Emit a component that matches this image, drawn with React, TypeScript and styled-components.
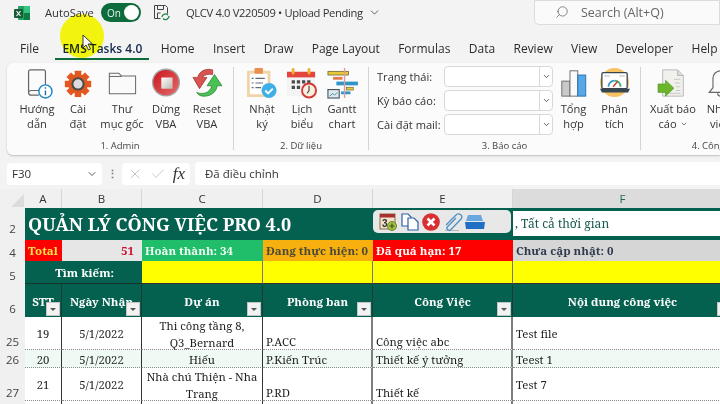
import { FC, ReactNode } from "react";
import styled, { createGlobalStyle } from "styled-components";
import { ChevronDown, Search, X, Check } from "lucide-react";

const uiFont = `"Open Sans", "Noto Sans", sans-serif`;
const sheetFont = `"Noto Serif", "Liberation Serif", "DejaVu Serif", serif`;
const green = "#04614f";

const GlobalStyle = createGlobalStyle`
    html, body {
        margin: 0;
        padding: 0;
        background: #f3f3f3;
    }
    body {
        width: 720px;
        height: 404px;
        overflow: hidden;
        font-family: ${uiFont};
    }
`;

const Page = styled.div`
    position: relative;
    width: 720px;
    height: 404px;
    overflow: hidden;
    background: #f3f3f3;
    color: #262626;
`;

/* title bar */
const TitleBar = styled.div`
    display: flex;
    align-items: center;
    height: 25px;
    padding: 0 0 0 14px;
    font-size: 11.2px;
`;

const AutoSave = styled.span`
    margin-left: 15px;
    color: #333;
`;

const Toggle = styled.div`
    display: flex;
    align-items: center;
    justify-content: space-between;
    width: 40px;
    height: 19px;
    margin-left: 7px;
    padding: 0 2px 0 6px;
    box-sizing: border-box;
    border-radius: 10px;
    background: #0e6b3c;
    color: #e8f3ec;
    font-size: 10px;

    i {
        display: block;
        width: 15px;
        height: 15px;
        border-radius: 50%;
        background: #fff;
    }
`;

const DocTitle = styled.span`
    display: flex;
    align-items: center;
    gap: 5px;
    margin-left: 16px;
    color: #333;
    letter-spacing: -0.33px;
    white-space: nowrap;
`;

const SearchBox = styled.div`
    display: flex;
    align-items: center;
    gap: 12px;
    margin-left: auto;
    width: 186px;
    height: 25px;
    margin-top: -1px;
    padding-left: 20px;
    box-sizing: border-box;
    background: #fafafa;
    border: 1px solid #dcdcdc;
    border-radius: 0 0 0 5px;
    color: #666;
    font-size: 12.5px;
    white-space: nowrap;

    svg {
        transform: scaleX(-1);
    }
`;

/* tabs */
const Tabs = styled.div`
    display: flex;
    gap: 18.4px;
    height: 38px;
    align-items: flex-start;
    padding: 15px 0 0 20px;
    box-sizing: border-box;
`;

const Tab = styled.div<{ $active?: boolean }>`
    position: relative;
    margin-left: ${(p) => (p.$active ? 5 : 0)}px;
    font-size: 12px;
    line-height: 17px;
    white-space: nowrap;
    color: ${(p) => (p.$active ? "#14284b" : "#2c2c2c")};
    font-weight: ${(p) => (p.$active ? 600 : 400)};

    &::after {
        content: "";
        display: ${(p) => (p.$active ? "block" : "none")};
        position: absolute;
        left: -7px;
        right: -7px;
        top: 18px;
        height: 2px;
        background: #0e6b3c;
    }
`;

/* ribbon */
const Ribbon = styled.div`
    display: flex;
    height: 92px;
    margin-left: 7px;
    background: #fbfbfb;
    border-radius: 6px 0 0 6px;
    box-shadow: 0 1px 2px rgba(0, 0, 0, 0.22);
`;

const Group = styled.div<{ $width: number; $last?: boolean }>`
    display: flex;
    flex-direction: column;
    flex: none;
    width: ${(p) => p.$width}px;
    box-sizing: border-box;
    margin: 4px 0 5px;
    border-right: ${(p) => (p.$last ? "none" : "1px solid #d4d4d4")};
`;

const GroupBody = styled.div<{ $pad?: number }>`
    display: flex;
    flex: 1;
    min-height: 0;
    padding-left: ${(p) => p.$pad ?? 0}px;
`;

const GroupLabel = styled.div`
    height: 8px;
    line-height: 8px;
    text-align: center;
    font-size: 9.5px;
    color: #444;
    white-space: nowrap;
`;

const ButtonRoot = styled.div<{ $width: number }>`
    display: flex;
    flex-direction: column;
    align-items: center;
    flex: none;
    width: ${(p) => p.$width}px;
    padding-top: 1px;
    font-size: 11.1px;
    line-height: 15px;
    color: #333;
    text-align: center;
    white-space: nowrap;

    > svg {
        display: block;
        flex: none;
        width: 30px;
        height: 30px;
        margin-bottom: 2.5px;
        overflow: visible;
    }
`;

interface RibbonButtonProps {
    width: number;
    icon: ReactNode;
    label: ReactNode;
}

const RibbonButton: FC<RibbonButtonProps> = ({ width, icon, label }) => (
    <ButtonRoot $width={width}>
        {icon}
        <div>{label}</div>
    </ButtonRoot>
);

const Fields = styled.div`
    display: flex;
    flex-direction: column;
    gap: 3px;
    width: 184px;
    margin-top: -1px;
    padding: 0 0 0 8px;
    box-sizing: border-box;
`;

const Field = styled.div`
    display: flex;
    align-items: center;
    justify-content: space-between;
    font-size: 11.1px;
    color: #333;
    white-space: nowrap;
`;

const Combo = styled.div`
    display: flex;
    justify-content: flex-end;
    align-items: center;
    width: 109px;
    height: 21px;
    box-sizing: border-box;
    background: #fff;
    border: 1px solid #d8d8d8;
    border-radius: 4px;

    span {
        display: flex;
        align-items: center;
        justify-content: center;
        width: 12px;
        height: 100%;
        border-left: 1px solid #d8d8d8;
    }
`;

/* formula bar */
const FormulaBar = styled.div`
    display: flex;
    align-items: center;
    height: 23px;
    margin-top: 7px;
    padding-left: 7px;
    font-size: 11.5px;
`;

const NameBox = styled.div`
    display: flex;
    align-items: center;
    justify-content: space-between;
    width: 95px;
    height: 22px;
    padding: 0 4px 0 5px;
    box-sizing: border-box;
    background: #fff;
    border-radius: 4px;
    color: #333;
`;

const Dots = styled.div`
    width: 20px;
    text-align: center;
    color: #777;
    font-weight: 700;
    font-size: 11px;
`;

const FxBox = styled.div`
    display: flex;
    align-items: center;
    justify-content: space-between;
    width: 68px;
    height: 22px;
    padding: 0 5px 0 5px;
    box-sizing: border-box;
    background: #fff;
    border-radius: 4px;
    margin-right: 5px;

    b {
        font-family: "Liberation Serif", serif;
        font-style: italic;
        font-weight: 400;
        font-size: 17px;
        color: #333;
    }
`;

const FormulaInput = styled.div`
    flex: 1;
    height: 23px;
    line-height: 23px;
    padding-left: 10px;
    background: #fff;
    border-radius: 4px 0 0 4px;
    color: #333;
`;

/* sheet */
const Sheet = styled.div`
    display: grid;
    grid-template-columns: 25px 37px 80px 121px 110px 140px 220px;
    grid-template-rows: 19px 32px 21px 23px 33px 33px 18px 33px 20px;
    margin-top: 4px;
    font-family: ${sheetFont};
`;

const Corner = styled.div`
    position: relative;
    background: #f0f0f0;

    &::after {
        content: "";
        position: absolute;
        right: 1px;
        bottom: 1px;
        border-style: solid;
        border-width: 0 0 13px 13px;
        border-color: transparent transparent #dcdcdc transparent;
    }
`;

const ColHead = styled.div<{ $selected?: boolean }>`
    display: flex;
    align-items: center;
    justify-content: center;
    font-family: ${uiFont};
    font-size: 11.5px;
    color: ${(p) => (p.$selected ? "#1c6b45" : "#333")};
    background: ${(p) => (p.$selected ? "#dcdcdc" : "#f0f0f0")};
    border-right: 1px solid #d6d6d6;
    box-sizing: border-box;
`;

const RowHead = styled.div<{ $pad?: number }>`
    display: flex;
    align-items: flex-end;
    justify-content: center;
    padding-bottom: ${(p) => p.$pad ?? 1}px;
    box-sizing: border-box;
    font-family: ${uiFont};
    font-size: 11.5px;
    color: #444;
    background: #f0f0f0;
`;

const TitleCell = styled.div`
    grid-column: span 4;
    display: flex;
    align-items: center;
    padding-left: 3px;
    background: ${green};
    color: #fff;
    font-size: 18px;
    font-weight: 700;
    white-space: nowrap;
`;

const ToolCell = styled.div`
    background: ${green};
    padding: 2px 2px 0 0;
    box-sizing: border-box;
`;

const ToolStrip = styled.div`
    display: flex;
    align-items: center;
    gap: 3.5px;
    width: 138px;
    height: 23px;
    padding-left: 6px;
    box-sizing: border-box;
    background: #e8e8e8;
    border-radius: 5px;

    svg {
        display: block;
        flex: none;
        width: 18px;
        height: 18px;
        overflow: visible;
    }
`;

const FilterCell = styled.div`
    background: ${green};
    padding: 3px 0 4px 0;
    box-sizing: border-box;

    div {
        height: 100%;
        line-height: 25px;
        padding-left: 2px;
        background: #fff;
        color: #14584a;
        font-size: 12px;
    }
`;

const StatCell = styled.div<{ $bg: string; $color: string; $right?: boolean }>`
    display: flex;
    align-items: center;
    justify-content: ${(p) => (p.$right ? "flex-end" : "flex-start")};
    padding: 0 ${(p) => (p.$right ? 8 : 3)}px 0 3px;
    box-sizing: border-box;
    background: ${(p) => p.$bg};
    color: ${(p) => p.$color};
    font-size: 11.5px;
    font-weight: 700;
    white-space: nowrap;
    overflow: hidden;
`;

const SearchLabel = styled.div`
    grid-column: span 2;
    display: flex;
    align-items: center;
    justify-content: flex-end;
    padding-right: 28px;
    background: ${green};
    color: #fff;
    font-size: 11.5px;
    font-weight: 700;
    border-bottom: 1px solid #18332c;
    box-sizing: border-box;
`;

const YellowCell = styled.div`
    background: #ffff00;
    border-right: 1px solid #777;
    border-bottom: 1px solid #333;
    box-sizing: border-box;
`;

const HeadCell = styled.div`
    position: relative;
    display: flex;
    align-items: center;
    justify-content: center;
    padding-top: 1px;
    box-sizing: border-box;
    background: ${green};
    color: #fff;
    font-size: 11.5px;
    font-weight: 700;
    white-space: nowrap;
    overflow: hidden;
    border-right: 1px solid #1d3a33;
`;

const FilterButton = styled.span`
    position: absolute;
    right: 1px;
    bottom: 1px;
    width: 14px;
    height: 14px;
    background: #f2f2f2;
    border: 1px solid #c4c4c4;
    box-sizing: border-box;

    &::after {
        content: "";
        position: absolute;
        left: 3px;
        top: 5px;
        border-style: solid;
        border-width: 3px 3px 0 3px;
        border-color: #555 transparent transparent transparent;
    }
`;

const DataCell = styled.div<{ $tint?: boolean; $center?: boolean; $bottom?: boolean; $heavy?: boolean }>`
    display: flex;
    align-items: ${(p) => (p.$bottom ? "flex-end" : "center")};
    justify-content: ${(p) => (p.$center ? "center" : "flex-start")};
    padding: ${(p) => (p.$bottom ? "0 3px" : "1px 3px 0")};
    box-sizing: border-box;
    text-align: ${(p) => (p.$center ? "center" : "left")};
    background: ${(p) => (p.$tint ? "#effaf5" : "#fff")};
    color: #1f1f1f;
    font-size: 11.3px;
    line-height: ${(p) => (p.$bottom ? 14 : 17)}px;
    white-space: pre-line;
    border-bottom: 1px dotted #8a8a8a;
    border-right: ${(p) => (p.$heavy ? "2px solid #7d7d7d" : "1px solid #333")};
`;

const Highlight = styled.div`
    position: absolute;
    left: 60px;
    top: 14px;
    width: 44px;
    height: 44px;
    border-radius: 50%;
    background: #ffff10;
    mix-blend-mode: multiply;
`;

const Pointer = styled.svg`
    position: absolute;
    left: 82px;
    top: 34px;
    width: 11px;
    height: 17px;
`;

/* icons */
const ExcelLogo = () => (
    <svg width="16" height="16" viewBox="0 0 16 16">
        <rect x="4" y="1" width="12" height="14" rx="1" fill="#21a366" />
        <rect x="10" y="1" width="6" height="7" fill="#33c481" />
        <rect x="10" y="8" width="6" height="7" fill="#107c41" />
        <rect x="0" y="4" width="9" height="9" rx="1" fill="#185c37" />
        <path d="M2.5 6l4 5M6.500 6l-4 5" stroke="#fff" strokeWidth="1.1" />
    </svg>
);

const SaveSync = () => (
    <svg width="17" height="17" viewBox="0 0 17 17" fill="none" style={{ marginLeft: 12 }}>
        <path d="M1.5 1.500h11l2 2v6M1.500 1.500v13h6" stroke="#444" strokeWidth="1" />
        <path d="M4.500 1.500v4h6v-4M4.500 14v-5h3" stroke="#444" strokeWidth="1" />
        <path d="M9 13a3.500 3.500 0 0 1 6-2M16 12a3.500 3.500 0 0 1-6 2.500" stroke="#1f8a4c" strokeWidth="1.4" />
    </svg>
);

const DocInfoIcon = () => (
    <svg viewBox="0 0 32 32" fill="none">
        <path d="M7 26V4a2 2 0 0 1 2-2h14a2 2 0 0 1 2 2v14" stroke="#666" strokeWidth="1.3" />
        <path d="M7 26a3 3 0 0 1 3-2h8M7 26a3 3 0 0 0 3 3h8" stroke="#666" strokeWidth="1.3" />
        <circle cx="25" cy="25" r="7" fill="#fff" stroke="#1d86c8" strokeWidth="1.5" />
        <path d="M25 24v5M25 20.500v1.500" stroke="#1d6f9f" strokeWidth="1.5" />
    </svg>
);

const GearIcon = () => (
    <svg viewBox="0 0 32 32">
        <g fill="#e2581f">
            {[0, 45, 90, 135, 180, 225, 270, 315].map((a) => (
                <rect key={a} x="12.500" y="3" width="7" height="6" rx="0.5" transform={`rotate(${a} 16 17)`} />
            ))}
            <circle cx="16" cy="17" r="10.500" />
        </g>
        <circle cx="16" cy="17" r="6" fill="#dcdcdc" stroke="#4b4b4b" strokeWidth="2.2" />
    </svg>
);

const FolderIcon = () => (
    <svg viewBox="0 0 32 32" fill="#fafafa" stroke="#6a6a6a" strokeWidth="1.1">
        <path d="M2.500 5.500h10l3 3h15v19h-28z" />
        <path d="M2.500 9h13" />
    </svg>
);

const StopIcon = () => (
    <svg viewBox="0 0 32 32">
        <defs>
            <linearGradient id="stopRed" x1="0" y1="0" x2="1" y2="1">
                <stop offset="0" stopColor="#c9151c" />
                <stop offset="1" stopColor="#e56a6a" />
            </linearGradient>
            <linearGradient id="stopSquare" x1="0" y1="0" x2="1" y2="1">
                <stop offset="0" stopColor="#ffffff" />
                <stop offset="1" stopColor="#bdb6b0" />
            </linearGradient>
        </defs>
        <circle cx="16" cy="15.500" r="15" fill="#a5a5a5" />
        <circle cx="16" cy="15.500" r="13.500" fill="url(#stopRed)" />
        <rect x="11" y="10" width="12" height="12" rx="0.5" fill="url(#stopSquare)" />
    </svg>
);

const ResetIcon = () => (
    <svg viewBox="0 0 32 32">
        <path d="M22 2C15 0 8 3 6 10H1l7 12 8-12h-5c2-3 7-4 11-3z" fill="#d9534f" stroke="#8c2b28" strokeWidth="0.7" />
        <path d="M24 7l8 12h-5c-1 7-8 12-16 11-3-.5-5-2-6-4 5 2 14 2 16-7h-5z" fill="#49c254" stroke="#23762b" strokeWidth="0.7" />
    </svg>
);

const LogIcon = () => (
    <svg viewBox="0 0 32 32">
        <rect x="0" y="3" width="25" height="28" rx="1" fill="#f1d3a8" />
        <rect x="3" y="6" width="19" height="22" fill="#fff" />
        <rect x="8" y="0" width="9" height="6" rx="1" fill="#e8904d" />
        <path d="M5 11h2M9 11h10M5 16h2M9 16h8M5 21h2M9 21h6" stroke="#5d6b78" strokeWidth="1.3" />
        <circle cx="23.500" cy="24" r="8" fill="#3fb0e6" />
        <path d="M19.500 24l3 3 5-5" fill="none" stroke="#fff" strokeWidth="2" />
    </svg>
);

const CalendarIcon = () => (
    <svg viewBox="0 0 32 32">
        <rect x="0" y="4" width="30" height="26" rx="1" fill="#f4f4f4" />
        <rect x="0" y="4" width="30" height="6" fill="#e2463f" />
        <rect x="5" y="0" width="3" height="7" rx="1.500" fill="#f0b030" />
        <rect x="22" y="0" width="3" height="7" rx="1.500" fill="#f0b030" />
        <path d="M5 13h3.500v3.500H5zM10.500 13H14v3.500h-3.500zM16 13h3.500v3.500H16zM21.500 13H25v3.500h-3.500zM5 19h3.500v3.500H5zM10.500 19H14v3.500h-3.500z" fill="#4a4a4a" />
        <circle cx="23.500" cy="24" r="7.500" fill="#fbeedd" stroke="#d23a36" strokeWidth="2" />
        <path d="M23.500 19v5l-2 3" fill="none" stroke="#444" strokeWidth="1.200" />
    </svg>
);

const GanttIcon = () => (
    <svg viewBox="0 0 32 32">
        <rect x="1" y="3.500" width="22" height="4" fill="#e8c93a" stroke="#55502a" strokeWidth="0.7" />
        <rect x="6.500" y="9.500" width="10" height="3" fill="#e57a50" />
        <rect x="10" y="14.500" width="23" height="4" fill="#2f95c8" />
        <rect x="21" y="20.500" width="7" height="3" fill="#e8c93a" stroke="#55502a" strokeWidth="0.6" />
        <rect x="1" y="23" width="12" height="9" fill="#dfe8ec" stroke="#4a5560" strokeWidth="1.200" />
        <path d="M3 30l3-3 2 2 3-3" fill="none" stroke="#3a8a9c" />
        <rect x="15" y="25" width="10" height="3" fill="#2f95c8" />
        <rect x="18" y="0" width="1.500" height="32" fill="#e59a9a" />
    </svg>
);

const BarsIcon = () => (
    <svg viewBox="0 0 32 32">
        <rect x="3" y="14" width="8.700" height="16" fill="#c9c9c9" stroke="#6a6a6a" />
        <rect x="11.700" y="3" width="8.300" height="27" fill="#fafafa" stroke="#6a6a6a" />
        <rect x="20" y="7.500" width="8.500" height="22.500" fill="#55a9e8" stroke="#2a70aa" />
    </svg>
);

const GaugeIcon = () => (
    <svg viewBox="0 0 32 32">
        <circle cx="15.500" cy="15.500" r="15.500" fill="#f6c264" />
        <rect x="2" y="5" width="27" height="17" rx="1.500" fill="#fff" stroke="#38464f" strokeWidth="1.400" />
        <path d="M0 22h32l-2 4H2z" fill="#38464f" />
        <path d="M9 20a6.500 6.500 0 0 1 6.500-6.500" fill="none" stroke="#3d9bc8" strokeWidth="2" />
        <path d="M15.500 13.500a6.500 6.500 0 0 1 6.500 6.500" fill="none" stroke="#3fae7a" strokeWidth="2" />
        <path d="M14 20l5-6" stroke="#d23a36" strokeWidth="1.600" />
        <path d="M5 8.500h5M21 8.500h5" stroke="#667" strokeWidth="1" strokeDasharray="1 1" />
    </svg>
);

const ExportIcon = () => (
    <svg viewBox="0 0 32 32">
        <path d="M5 2h16l6 6v22H5z" fill="#f1f1ec" stroke="#b5b5b5" />
        <path d="M21 2v6h6" fill="#dcdcdc" stroke="#b5b5b5" />
        <path d="M17 12h7M18 16h6M19 20h5M19 24h5M8 27h16" stroke="#c4c4c4" />
        <path d="M0 17h8v-4l9 8.500-9 8.500v-4H0z" fill="#6cb62c" stroke="#4a8a1e" strokeWidth="0.6" />
    </svg>
);

const BellIcon = () => (
    <svg viewBox="0 0 32 32" fill="#fafafa" stroke="#666" strokeWidth="1.200">
        <path d="M16.500 3a8 8 0 0 1 8 8v10l4 5H4.500l4-5V11a8 8 0 0 1 8-8z" />
        <path d="M13.500 27a3 3 0 0 0 6 0" />
    </svg>
);

const AddDateIcon = () => (
    <svg viewBox="0 0 18 18">
        <rect x="1" y="1" width="15" height="15" fill="#efe2c8" stroke="#8a6a48" />
        <rect x="1" y="1" width="15" height="3.500" fill="#a8312f" />
        <text x="3" y="14" fontSize="10" fontWeight="700" fill="#333" fontFamily="Liberation Sans">3</text>
        <circle cx="13" cy="13" r="4.500" fill="#a5c04a" stroke="#6d8427" />
        <path d="M13 10.500v5M10.500 13h5" stroke="#3d5212" strokeWidth="1.200" />
    </svg>
);

const CopyIcon = () => (
    <svg viewBox="0 0 18 18" fill="#fff" stroke="#2f5fa8" strokeWidth="1.200">
        <path d="M1 1h6l3 3v9H1z" />
        <path d="M7 5h6l4 4v8H7z" />
    </svg>
);

const DeleteIcon = () => (
    <svg viewBox="0 0 18 18">
        <circle cx="9" cy="9" r="8.800" fill="#d92f33" />
        <path d="M5.500 5.500l7 7M12.500 5.500l-7 7" stroke="#fff" strokeWidth="2.600" />
    </svg>
);

const ClipIcon = () => (
    <svg viewBox="0 0 18 18" fill="none">
        <path d="M1 17.500h14" stroke="#a8a8a8" strokeWidth="0.800" />
        <path d="M2 12L12 2a3 3 0 0 1 5 4L7 16.500a2 2 0 0 1-3.500-2.800L12 5" stroke="#4f8fc4" strokeWidth="1.300" />
    </svg>
);

const StackIcon = () => (
    <svg viewBox="0 0 18 18">
        <path d="M3 2h13l2 6H1z" fill="#6aa6e0" />
        <path d="M0 9h20l-1 7H1z" fill="#1f6fc4" />
    </svg>
);

const ComboArrow = () => (
    <Combo>
        <span>
            <ChevronDown size={9} strokeWidth={2} />
        </span>
    </Combo>
);

const App: FC = () => {
    return (
        <Page>
            <GlobalStyle />
            <TitleBar>
                <ExcelLogo />
                <AutoSave>AutoSave</AutoSave>
                <Toggle>
                    On
                    <i />
                </Toggle>
                <SaveSync />
                <DocTitle>
                    QLCV 4.0 V220509 • Upload Pending
                    <ChevronDown size={13} strokeWidth={1.4} />
                </DocTitle>
                <SearchBox>
                    <Search size={14} strokeWidth={1.3} />
                    Search (Alt+Q)
                </SearchBox>
            </TitleBar>

            <Tabs>
                <Tab>File</Tab>
                <Tab $active>EMS Tasks 4.0</Tab>
                <Tab>Home</Tab>
                <Tab>Insert</Tab>
                <Tab>Draw</Tab>
                <Tab>Page Layout</Tab>
                <Tab>Formulas</Tab>
                <Tab>Data</Tab>
                <Tab>Review</Tab>
                <Tab>View</Tab>
                <Tab>Developer</Tab>
                <Tab>Help</Tab>
            </Tabs>

            <Ribbon>
                <Group $width={227}>
                    <GroupBody $pad={5}>
                        <RibbonButton width={50} icon={<DocInfoIcon />} label={<>Hướng<br />dẫn</>} />
                        <RibbonButton width={32} icon={<GearIcon />} label={<>Cài<br />đặt</>} />
                        <RibbonButton width={56} icon={<FolderIcon />} label={<>Thư<br />mục gốc</>} />
                        <RibbonButton width={32} icon={<StopIcon />} label={<>Dừng<br />VBA</>} />
                        <RibbonButton width={50} icon={<ResetIcon />} label={<>Reset<br />VBA</>} />
                    </GroupBody>
                    <GroupLabel>1. Admin</GroupLabel>
                </Group>
                <Group $width={135}>
                    <GroupBody $pad={8}>
                        <RibbonButton width={40} icon={<LogIcon />} label={<>Nhật<br />ký</>} />
                        <RibbonButton width={40} icon={<CalendarIcon />} label={<>Lịch<br />biểu</>} />
                        <RibbonButton width={40} icon={<GanttIcon />} label={<>Gantt<br />chart</>} />
                    </GroupBody>
                    <GroupLabel>2. Dữ liệu</GroupLabel>
                </Group>
                <Group $width={272}>
                    <GroupBody>
                        <Fields>
                            <Field>Trạng thái:<ComboArrow /></Field>
                            <Field>Kỳ báo cáo:<ComboArrow /></Field>
                            <Field>Cài đặt mail:<ComboArrow /></Field>
                        </Fields>
                        <RibbonButton width={41} icon={<BarsIcon />} label={<>Tổng<br />hợp</>} />
                        <RibbonButton width={41} icon={<GaugeIcon />} label={<>Phân<br />tích</>} />
                    </GroupBody>
                    <GroupLabel>3. Báo cáo</GroupLabel>
                </Group>
                <Group $width={154} $last>
                    <GroupBody>
                        <RibbonButton width={64} icon={<ExportIcon />} label={<>Xuất báo<br />cáo <ChevronDown size={8} strokeWidth={2} /></>} />
                        <RibbonButton width={30} icon={<BellIcon />} label={<>Nhắc<br />việc</>} />
                    </GroupBody>
                    <GroupLabel>4. Công việc</GroupLabel>
                </Group>
            </Ribbon>

            <FormulaBar>
                <NameBox>
                    F30
                    <ChevronDown size={12} strokeWidth={1.6} />
                </NameBox>
                <Dots>⋮</Dots>
                <FxBox>
                    <X size={16} strokeWidth={1} color="#aaa" />
                    <Check size={16} strokeWidth={1} color="#aaa" />
                    <b>fx</b>
                </FxBox>
                <FormulaInput>Đã điều chỉnh</FormulaInput>
            </FormulaBar>

            <Sheet>
                <Corner />
                <ColHead>A</ColHead>
                <ColHead>B</ColHead>
                <ColHead>C</ColHead>
                <ColHead>D</ColHead>
                <ColHead>E</ColHead>
                <ColHead $selected>F</ColHead>

                <RowHead $pad={4}>2</RowHead>
                <TitleCell>QUẢN LÝ CÔNG VIỆC PRO 4.0</TitleCell>
                <ToolCell>
                    <ToolStrip>
                        <AddDateIcon />
                        <CopyIcon />
                        <DeleteIcon />
                        <ClipIcon />
                        <StackIcon />
                    </ToolStrip>
                </ToolCell>
                <FilterCell><div>, Tất cả thời gian</div></FilterCell>

                <RowHead>4</RowHead>
                <StatCell $bg="#ff0000" $color="#ffe94a">Total</StatCell>
                <StatCell $bg="#e6e6e6" $color="#c8102e" $right>51</StatCell>
                <StatCell $bg="#20bd6a" $color="#f2fff6">Hoàn thành: 34</StatCell>
                <StatCell $bg="#f7b00e" $color="#4a4a3a">Đang thực hiện: 0</StatCell>
                <StatCell $bg="#ff0000" $color="#fff">Đã quá hạn: 17</StatCell>
                <StatCell $bg="#d6d6d6" $color="#2f3b4c">Chưa cập nhật: 0</StatCell>

                <RowHead>5</RowHead>
                <SearchLabel>Tìm kiếm:</SearchLabel>
                <YellowCell />
                <YellowCell />
                <YellowCell />
                <YellowCell />

                <RowHead>6</RowHead>
                <HeadCell>STT<FilterButton /></HeadCell>
                <HeadCell>Ngày Nhận<FilterButton /></HeadCell>
                <HeadCell>Dự án<FilterButton /></HeadCell>
                <HeadCell>Phòng ban<FilterButton /></HeadCell>
                <HeadCell>Công Việc<FilterButton /></HeadCell>
                <HeadCell>Nội dung công việc<FilterButton /></HeadCell>

                <RowHead>25</RowHead>
                <DataCell $center>19</DataCell>
                <DataCell $center>5/1/2022</DataCell>
                <DataCell $center>{"Thi công tầng 8,\nQ3_Bernard"}</DataCell>
                <DataCell $bottom $heavy>P.ACC</DataCell>
                <DataCell $bottom $heavy>Công việc abc</DataCell>
                <DataCell>Test file</DataCell>

                <RowHead>26</RowHead>
                <DataCell $tint $center>20</DataCell>
                <DataCell $tint $center>5/1/2022</DataCell>
                <DataCell $tint $center>Hiếu</DataCell>
                <DataCell $tint $heavy>P.Kiến Trúc</DataCell>
                <DataCell $tint $heavy>Thiết kế ý tưởng</DataCell>
                <DataCell $tint>Teest 1</DataCell>

                <RowHead>27</RowHead>
                <DataCell $center>21</DataCell>
                <DataCell $center>5/1/2022</DataCell>
                <DataCell $center>{"Nhà chú Thiện - Nha\nTrang"}</DataCell>
                <DataCell $bottom $heavy>P.RD</DataCell>
                <DataCell $bottom $heavy>Thiết kế</DataCell>
                <DataCell>Test 7</DataCell>

                <RowHead />
                <DataCell />
                <DataCell />
                <DataCell />
                <DataCell $heavy />
                <DataCell $heavy />
                <DataCell />
            </Sheet>

            <Highlight />
            <Pointer viewBox="0 0 11 17">
                <path d="M1 1v13l3-3 2.500 5 2-1-2.500-5h4.500z" fill="#fff" stroke="#222" strokeWidth="0.9" />
            </Pointer>
        </Page>
    );
};

export default App;
